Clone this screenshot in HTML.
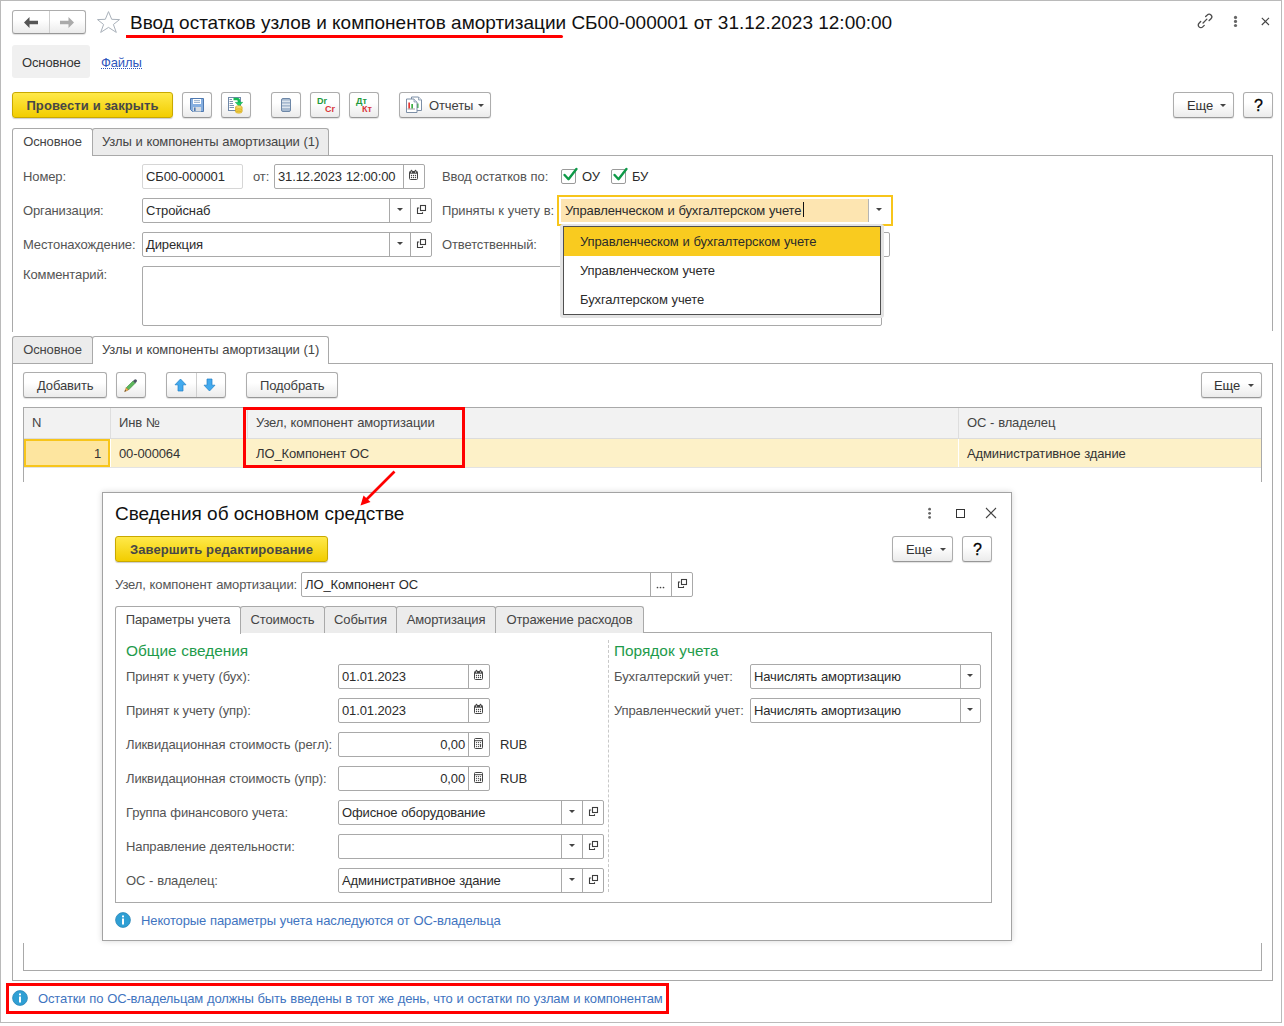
<!DOCTYPE html>
<html><head><meta charset="utf-8">
<style>
*{box-sizing:border-box;margin:0;padding:0}
html,body{width:1284px;height:1026px;overflow:hidden;background:#fff}
body{font-family:"Liberation Sans",sans-serif;font-size:13px;color:#333;position:relative;letter-spacing:-0.12px;word-spacing:0.35px}
.a{position:absolute}
.t{position:absolute;white-space:nowrap;line-height:16px}
.btn{position:absolute;border:1px solid #adadad;border-bottom-color:#979797;border-radius:3px;background:linear-gradient(#ffffff 0%,#ffffff 40%,#ebebeb 100%);box-shadow:0 1px 1px rgba(0,0,0,.12)}
.ybtn{position:absolute;border:1px solid #c9a900;border-radius:3px;background:linear-gradient(#ffe94a,#f2cd00);box-shadow:0 1px 1px rgba(0,0,0,.2);font-weight:bold;color:#474747;text-align:center;letter-spacing:.1px;word-spacing:0}
.fld{position:absolute;border:1px solid #a9a9a9;border-radius:2px;background:#fff}
.sep{position:absolute;top:0;bottom:0;width:1px;background:#a9a9a9}
.lbl{position:absolute;white-space:nowrap;color:#545454;line-height:16px}
.val{position:absolute;white-space:nowrap;color:#2b2b2b;line-height:16px}
.tab{position:absolute;border:1px solid #a9a9a9;border-bottom:none;border-radius:3px 3px 0 0;background:#ececec;color:#444;text-align:center;white-space:nowrap}
.tab.act{background:#fff}
.ln{position:absolute;background:#a9a9a9}
.red{position:absolute;border:3px solid #ff0000}
.arr{position:absolute;width:0;height:0;border-left:3px solid transparent;border-right:3px solid transparent;border-top:3.5px solid #444}
</style></head><body>

<!-- outer frame -->
<div class="a" style="left:0;top:0;width:1282px;height:1023px;border:1px solid #bababa"></div>

<!-- nav -->
<div class="btn" style="left:12px;top:10px;width:74px;height:24px;border-radius:3px"></div>
<div class="ln" style="left:49px;top:11px;width:1px;height:22px;background:#cfcfcf"></div>
<svg class="a" style="left:23px;top:16px" width="16" height="13" viewBox="0 0 16 13"><path d="M1 6.5 L6.5 1 V4.8 H15 V8.2 H6.5 V12 Z" fill="#555"/></svg>
<svg class="a" style="left:59px;top:16px" width="16" height="13" viewBox="0 0 16 13"><path d="M15 6.5 L9.5 1 V4.8 H1 V8.2 H9.5 V12 Z" fill="#aaa"/></svg>
<svg class="a" style="left:96px;top:11px" width="25" height="23" viewBox="0 0 25 23"><path d="M12.5 0.6 L15.7 8.3 L23.5 8.6 L17.4 13.5 L20.3 21.4 L12.5 16.4 L4.7 21.4 L7.6 13.5 L1.5 8.6 L9.3 8.3 Z" fill="none" stroke="#a9b1ba" stroke-width="1"/></svg>

<!-- title -->
<div class="t" style="left:130px;top:12px;font-size:19px;line-height:22px;color:#111;letter-spacing:0;word-spacing:0">Ввод остатков узлов и компонентов амортизации СБ00-000001 от 31.12.2023 12:00:00</div>
<div class="a" style="left:126px;top:35px;width:437px;height:3px;background:#ff0000;border-radius:0 2px 2px 0"></div>

<!-- top right icons -->
<svg class="a" style="left:1197px;top:13px" width="16" height="16" viewBox="0 0 19 19"><g fill="none" stroke="#4d4d4d" stroke-width="1.6" stroke-linecap="round"><path d="M10.3 4.2 L12.2 2.4 A3 3 0 0 1 16.6 6.8 L14.4 9"/><path d="M8.6 14.7 L6.8 16.5 A3 3 0 0 1 2.4 12.1 L4.4 10"/><path d="M7.2 11.8 L11.7 7.3"/></g></svg>
<svg class="a" style="left:1232px;top:14px" width="8" height="15" viewBox="0 0 8 15"><circle cx="3.5" cy="3.4" r="1.6" fill="#666"/><circle cx="3.5" cy="7.4" r="1.6" fill="#666"/><circle cx="3.5" cy="11.5" r="1.6" fill="#666"/></svg>
<svg class="a" style="left:1260px;top:16px" width="11" height="11" viewBox="0 0 11 11"><path d="M1.8 1.8 L9 9 M9 1.8 L1.8 9" stroke="#444" stroke-width="1.1"/></svg>

<!-- section nav -->
<div class="a" style="left:12px;top:45px;width:78px;height:33px;background:#f0f0f0;border-radius:3px"></div>
<div class="t" style="left:22px;top:55px;color:#333">Основное</div>
<div class="t" style="left:101px;top:55px;color:#2d55bd">Файлы</div>
<div class="a" style="left:101px;top:68px;width:41px;height:0;border-top:1px dotted #2d55bd"></div>


<!-- toolbar -->
<div class="ybtn" style="left:12px;top:92px;width:161px;height:26px;line-height:25px">Провести и закрыть</div>
<div class="btn" style="left:182px;top:92px;width:30px;height:26px"></div>
<svg class="a" style="left:189px;top:97px" width="16" height="16" viewBox="0 0 16 16"><path d="M1.5 1.5 H14.5 V14.5 H3.5 L1.5 12.5 Z" fill="#86afe0" stroke="#4f79b0"/><rect x="4" y="2" width="8" height="5" fill="#fff"/><path d="M5 3.6 H11 M5 5.4 H11" stroke="#7d9cc0" stroke-width=".8"/><rect x="4" y="10" width="8" height="4.5" fill="#d8dde2"/><rect x="5" y="10.5" width="1.6" height="3.5" fill="#4f79b0"/></svg>
<div class="btn" style="left:221px;top:92px;width:30px;height:26px"></div>
<svg class="a" style="left:227px;top:96px" width="19" height="19" viewBox="0 0 19 19"><rect x="1.5" y="1.5" width="12" height="13" fill="#fff" stroke="#7088a8"/><path d="M2.5 3.5 H5 M2.5 5.5 H6 M2.5 7.5 H6 M2.5 9.5 H7 M2.5 11.5 H7" stroke="#6f86a6" stroke-width=".9"/><path d="M6.5 3 H10 Q12 3 12 5.5 V7" fill="none" stroke="#14b955" stroke-width="2.6"/><path d="M8.3 6.3 H15.7 L12 10.3 Z" fill="#1ccf63" stroke="#12a54b" stroke-width=".5"/><path d="M8.5 11 V15.8 A3.3 1.4 0 0 0 15.1 15.8 V11" fill="#f2d54e" stroke="#d1a316" stroke-width=".6"/><ellipse cx="11.8" cy="11" rx="3.3" ry="1.3" fill="#f8e27a" stroke="#d1a316" stroke-width=".6"/><path d="M8.5 12.8 A3.3 1.3 0 0 0 15.1 12.8 M8.5 14.4 A3.3 1.3 0 0 0 15.1 14.4" fill="none" stroke="#d1a316" stroke-width=".6"/></svg>
<div class="btn" style="left:271px;top:92px;width:30px;height:26px"></div>
<svg class="a" style="left:280px;top:97px" width="12" height="16" viewBox="0 0 12 16"><rect x="1.5" y="1.5" width="9" height="13" rx="1.5" fill="#a7bad0" stroke="#6d87a7"/><path d="M2 4.2 H10 M2 7.2 H10 M2 10.3 H10" stroke="#eef3f8" stroke-width="1.1"/></svg>
<div class="btn" style="left:310px;top:92px;width:30px;height:26px"></div>
<div class="t" style="left:317px;top:96px;font-size:9px;font-weight:bold;color:#1e9a3c;line-height:10px;letter-spacing:0">Dr</div>
<div class="t" style="left:325px;top:104px;font-size:9px;font-weight:bold;color:#d9343a;line-height:10px;letter-spacing:0">Cr</div>
<div class="btn" style="left:349px;top:92px;width:30px;height:26px"></div>
<div class="t" style="left:356px;top:96px;font-size:9px;font-weight:bold;color:#1e9a3c;line-height:10px;letter-spacing:0">Дт</div>
<div class="t" style="left:362px;top:104px;font-size:9px;font-weight:bold;color:#d9343a;line-height:10px;letter-spacing:0">Кт</div>
<div class="btn" style="left:399px;top:92px;width:92px;height:26px"></div>
<svg class="a" style="left:405px;top:96px" width="17" height="18" viewBox="0 0 17 18"><path d="M6.5 1 H13.5 L16.5 4 V14.5 H6.5 Z" fill="#fff" stroke="#7d8fa6"/><path d="M13.5 1 V4 H16.5" fill="#dde3ea" stroke="#7d8fa6" stroke-width=".7"/><rect x="12" y="7.5" width="1.5" height="4.5" fill="#3cb043"/><path d="M1.5 3 H9 L12 6 V16.5 H1.5 Z" fill="#fff" stroke="#7d8fa6"/><path d="M9 3 V6 H12" fill="#dde3ea" stroke="#7d8fa6" stroke-width=".7"/><rect x="3.3" y="6.5" width="1.7" height="6" fill="#e53935"/><rect x="6.3" y="8" width="1.7" height="4.5" fill="#3cb043"/><path d="M2.5 13 H10" stroke="#777" stroke-width=".7"/></svg>
<div class="t" style="left:429px;top:98px;color:#404040">Отчеты</div>
<div class="arr" style="left:478px;top:104px"></div>
<div class="btn" style="left:1173px;top:92px;width:61px;height:26px"></div>
<div class="t" style="left:1187px;top:98px;color:#333">Еще</div>
<div class="arr" style="left:1220px;top:104px"></div>
<div class="btn" style="left:1243px;top:92px;width:30px;height:26px"></div>
<div class="t" style="left:1254px;top:97px;color:#000;font-size:16px;line-height:18px;-webkit-text-stroke:0.3px #000">?</div>

<!-- tabs 1 -->
<div class="ln" style="left:92px;top:155px;width:1181px;height:1px"></div>
<div class="ln" style="left:1272px;top:155px;width:1px;height:176px"></div>
<div class="ln" style="left:12px;top:155px;width:1px;height:177px"></div>
<div class="tab act" style="left:12px;top:128px;width:81px;height:28px;line-height:26px;border-bottom:none">Основное</div>
<div class="tab" style="left:92px;top:128px;width:237px;height:27px;line-height:26px">Узлы и компоненты амортизации (1)</div>

<!-- form rows -->
<div class="lbl" style="left:23px;top:169px">Номер:</div>
<div class="fld" style="left:142px;top:164px;width:101px;height:25px;border-color:#d6d6d6"></div>
<div class="val" style="left:146px;top:169px">СБ00-000001</div>
<div class="lbl" style="left:253px;top:169px">от:</div>
<div class="fld" style="left:274px;top:164px;width:151px;height:25px"><div class="sep" style="left:128px"></div></div>
<div class="val" style="left:278px;top:169px">31.12.2023 12:00:00</div>
<svg class="a" style="left:408px;top:169px" width="11" height="12" viewBox="0 0 11 12"><rect x="1.5" y="2.5" width="8" height="8" rx="1" fill="#fff" stroke="#444"/><rect x="1.5" y="2.5" width="8" height="2.2" fill="#444"/><circle cx="3.5" cy="1.6" r="0.9" fill="#444"/><circle cx="7.5" cy="1.6" r="0.9" fill="#444"/><rect x="3" y="2.6" width="1" height="1" fill="#fff"/><rect x="7" y="2.6" width="1" height="1" fill="#fff"/><g fill="#444"><circle cx="3.5" cy="6.5" r=".65"/><circle cx="5.5" cy="6.5" r=".65"/><circle cx="7.5" cy="6.5" r=".65"/><circle cx="3.5" cy="8.5" r=".65"/><circle cx="5.5" cy="8.5" r=".65"/><circle cx="7.5" cy="8.5" r=".65"/></g></svg>

<div class="lbl" style="left:442px;top:169px">Ввод остатков по:</div>
<div class="a" style="left:561px;top:169px;width:15px;height:15px;border:1px solid #9a9a9a;border-radius:2px;background:#fff"></div>
<svg class="a" style="left:563px;top:166px" width="16" height="16" viewBox="0 0 16 16"><path d="M1.6 9 L5.5 13.2 L13.4 3" fill="none" stroke="#0e9a48" stroke-width="2.4" stroke-linecap="round" stroke-linejoin="round"/></svg>
<div class="val" style="left:582px;top:169px">ОУ</div>
<div class="a" style="left:611px;top:169px;width:15px;height:15px;border:1px solid #9a9a9a;border-radius:2px;background:#fff"></div>
<svg class="a" style="left:613px;top:166px" width="16" height="16" viewBox="0 0 16 16"><path d="M1.6 9 L5.5 13.2 L13.4 3" fill="none" stroke="#0e9a48" stroke-width="2.4" stroke-linecap="round" stroke-linejoin="round"/></svg>
<div class="val" style="left:632px;top:169px">БУ</div>

<div class="lbl" style="left:23px;top:203px">Организация:</div>
<div class="fld" style="left:142px;top:198px;width:290px;height:25px"><div class="sep" style="left:246px"></div><div class="sep" style="left:267px"></div></div>
<div class="val" style="left:146px;top:203px">Стройснаб</div>
<div class="arr" style="left:397px;top:208px"></div>
<svg class="a" style="left:416px;top:204px" width="11" height="11" viewBox="0 0 11 11"><g fill="none" stroke="#3d3d3d" stroke-width="1.1"><rect x="4.5" y="1.5" width="5" height="5"/><path d="M3.2 4 H1.5 V9.5 H6.5 V8.2"/></g></svg>

<div class="lbl" style="left:442px;top:203px">Приняты к учету в:</div>
<div class="a" style="left:557px;top:195px;width:336px;height:31px;border:2px solid #f7c51b;background:#fff"></div>
<div class="a" style="left:561px;top:199px;width:307px;height:23px;background:#fde5b1"></div>
<div class="ln" style="left:868px;top:199px;width:1px;height:23px;background:#b5b5b5"></div>
<div class="val" style="left:565px;top:203px">Управленческом и бухгалтерском учете</div>
<div class="a" style="left:803px;top:202px;width:1px;height:15px;background:#111"></div>
<div class="arr" style="left:876px;top:208px"></div>

<div class="lbl" style="left:23px;top:237px">Местонахождение:</div>
<div class="fld" style="left:142px;top:232px;width:290px;height:25px"><div class="sep" style="left:246px"></div><div class="sep" style="left:267px"></div></div>
<div class="val" style="left:146px;top:237px">Дирекция</div>
<div class="arr" style="left:397px;top:242px"></div>
<svg class="a" style="left:416px;top:238px" width="11" height="11" viewBox="0 0 11 11"><g fill="none" stroke="#3d3d3d" stroke-width="1.1"><rect x="4.5" y="1.5" width="5" height="5"/><path d="M3.2 4 H1.5 V9.5 H6.5 V8.2"/></g></svg>
<div class="lbl" style="left:442px;top:237px">Ответственный:</div>
<div class="fld" style="left:570px;top:232px;width:320px;height:25px"></div>

<div class="lbl" style="left:23px;top:267px">Комментарий:</div>
<div class="fld" style="left:142px;top:266px;width:740px;height:60px"></div>

<!-- dropdown list -->
<div class="a" style="left:560px;top:224px;width:324px;height:94px;background:#e3e3e3;border-radius:3px"></div>
<div class="a" style="left:563px;top:226px;width:318px;height:89px;border:1px solid #4f4f4f;background:#fff"></div>
<div class="a" style="left:564px;top:227px;width:316px;height:29px;background:#f9cb1f"></div>
<div class="val" style="left:580px;top:234px">Управленческом и бухгалтерском учете</div>
<div class="val" style="left:580px;top:263px">Управленческом учете</div>
<div class="val" style="left:580px;top:292px">Бухгалтерском учете</div>

<!-- tabs 2 -->
<div class="ln" style="left:12px;top:363px;width:1261px;height:1px"></div>
<div class="ln" style="left:1272px;top:363px;width:1px;height:618px"></div>
<div class="ln" style="left:12px;top:363px;width:1px;height:618px"></div>
<div class="ln" style="left:12px;top:980px;width:1261px;height:1px"></div>
<div class="tab" style="left:12px;top:336px;width:81px;height:27px;line-height:26px">Основное</div>
<div class="tab act" style="left:92px;top:336px;width:237px;height:28px;line-height:26px">Узлы и компоненты амортизации (1)</div>

<!-- table toolbar -->
<div class="btn" style="left:23px;top:372px;width:84px;height:26px"></div>
<div class="t" style="left:37px;top:378px;color:#3d3d3d">Добавить</div>
<div class="btn" style="left:116px;top:372px;width:30px;height:26px"></div>
<svg class="a" style="left:123px;top:378px" width="15" height="15" viewBox="0 0 15 15"><path d="M3.2 9.8 L10 3 L12.2 5.2 L5.4 12 Z" fill="#5cb85c" stroke="#3f8a3f" stroke-width=".6"/><path d="M10 3 L11.3 1.7 A1.55 1.55 0 0 1 13.5 3.9 L12.2 5.2 Z" fill="#4b5563"/><path d="M3.2 9.8 L5.4 12 L1.6 13.6 Z" fill="#f4b24a" stroke="#a86d1c" stroke-width=".5"/><path d="M1.6 13.6 L2.2 12.1 L3.1 13 Z" fill="#333"/></svg>
<div class="btn" style="left:166px;top:372px;width:60px;height:26px"></div>
<div class="ln" style="left:196px;top:373px;width:1px;height:24px;background:#cfcfcf"></div>
<svg class="a" style="left:174px;top:378px" width="13" height="14" viewBox="0 0 13 14"><path d="M6.5 1 L12 6.8 H9 V13 H4 V6.8 H1 Z" fill="#42aaee" stroke="#1f7fc6" stroke-width=".7"/></svg>
<svg class="a" style="left:203px;top:378px" width="13" height="14" viewBox="0 0 13 14"><path d="M6.5 13 L12 7.2 H9 V1 H4 V7.2 H1 Z" fill="#42aaee" stroke="#1f7fc6" stroke-width=".7"/></svg>
<div class="btn" style="left:246px;top:372px;width:92px;height:26px"></div>
<div class="t" style="left:260px;top:378px;color:#3d3d3d">Подобрать</div>
<div class="btn" style="left:1201px;top:372px;width:61px;height:26px"></div>
<div class="t" style="left:1214px;top:378px;color:#333">Еще</div>
<div class="arr" style="left:1248px;top:384px"></div>

<!-- table -->
<div class="a" style="left:23px;top:407px;width:1239px;height:75px;border:1px solid #a9a9a9;border-bottom:none"></div>
<div class="a" style="left:24px;top:408px;width:1237px;height:30px;background:#f2f2f2"></div>
<div class="ln" style="left:24px;top:438px;width:1237px;height:1px;background:#dcdcdc"></div>
<div class="ln" style="left:110px;top:408px;width:1px;height:30px;background:#dedede"></div>
<div class="ln" style="left:247px;top:408px;width:1px;height:30px;background:#dedede"></div>
<div class="ln" style="left:958px;top:408px;width:1px;height:30px;background:#dedede"></div>
<div class="a" style="left:24px;top:439px;width:1237px;height:28px;background:#fdf1c8"></div>
<div class="ln" style="left:110px;top:439px;width:1px;height:28px;background:#fff"></div>
<div class="ln" style="left:958px;top:439px;width:1px;height:28px;background:#fff"></div>
<div class="ln" style="left:24px;top:467px;width:1237px;height:1px;background:#e3e3e3"></div>
<div class="a" style="left:24px;top:439px;width:86px;height:28px;border:2px solid #f7c51b;background:#fde59f"></div>
<div class="t" style="left:32px;top:415px;color:#444">N</div>
<div class="t" style="left:119px;top:415px;color:#444">Инв №</div>
<div class="t" style="left:256px;top:415px;color:#444">Узел, компонент амортизации</div>
<div class="t" style="left:967px;top:415px;color:#444">ОС - владелец</div>
<div class="t" style="left:94px;top:446px;color:#333">1</div>
<div class="t" style="left:119px;top:446px;color:#333">00-000064</div>
<div class="t" style="left:256px;top:446px;color:#333">ЛО_Компонент ОС</div>
<div class="t" style="left:967px;top:446px;color:#333">Административное здание</div>
<div class="red" style="left:243px;top:407px;width:222px;height:61px"></div>
<div class="ln" style="left:23px;top:943px;width:1px;height:28px"></div>
<div class="ln" style="left:1261px;top:943px;width:1px;height:28px"></div>
<div class="ln" style="left:23px;top:970px;width:1239px;height:1px"></div>

<!-- popup -->
<div class="a" style="left:102px;top:492px;width:910px;height:449px;border:1px solid #a3a3a3;background:#fff;box-shadow:0 0 6px rgba(0,0,0,.16)"></div>
<div class="t" style="left:115px;top:503px;font-size:19px;line-height:22px;color:#111;letter-spacing:0;word-spacing:0">Сведения об основном средстве</div>
<svg class="a" style="left:926px;top:506px" width="8" height="15" viewBox="0 0 8 15"><circle cx="3.6" cy="3.2" r="1.4" fill="#666"/><circle cx="3.6" cy="7.3" r="1.4" fill="#666"/><circle cx="3.6" cy="11.4" r="1.4" fill="#666"/></svg>
<div class="a" style="left:956px;top:509px;width:9px;height:9px;border:1.3px solid #333"></div>
<svg class="a" style="left:984px;top:506px" width="13" height="13" viewBox="0 0 13 13"><path d="M2 2 L12 12 M12 2 L2 12" stroke="#444" stroke-width="1.1"/></svg>
<div class="ybtn" style="left:115px;top:536px;width:213px;height:26px;line-height:25px">Завершить редактирование</div>
<div class="btn" style="left:892px;top:536px;width:61px;height:26px"></div>
<div class="t" style="left:906px;top:542px;color:#333">Еще</div>
<div class="arr" style="left:940px;top:548px"></div>
<div class="btn" style="left:962px;top:536px;width:30px;height:26px"></div>
<div class="t" style="left:973px;top:541px;color:#000;font-size:16px;line-height:18px;-webkit-text-stroke:0.3px #000">?</div>

<div class="lbl" style="left:115px;top:577px">Узел, компонент амортизации:</div>
<div class="fld" style="left:301px;top:572px;width:392px;height:25px"><div class="sep" style="left:348px"></div><div class="sep" style="left:369px"></div></div>
<div class="val" style="left:305px;top:577px">ЛО_Компонент ОС</div>
<svg class="a" style="left:655px;top:585px" width="11" height="5" viewBox="0 0 11 5"><g fill="#444"><circle cx="2.5" cy="2.5" r=".85"/><circle cx="5.5" cy="2.5" r=".85"/><circle cx="8.5" cy="2.5" r=".85"/></g></svg>
<svg class="a" style="left:677px;top:578px" width="11" height="11" viewBox="0 0 11 11"><g fill="none" stroke="#3d3d3d" stroke-width="1.1"><rect x="4.5" y="1.5" width="5" height="5"/><path d="M3.2 4 H1.5 V9.5 H6.5 V8.2"/></g></svg>

<div class="ln" style="left:240px;top:632px;width:752px;height:1px"></div>
<div class="ln" style="left:991px;top:632px;width:1px;height:271px"></div>
<div class="ln" style="left:115px;top:632px;width:1px;height:271px"></div>
<div class="ln" style="left:115px;top:902px;width:877px;height:1px"></div>
<div class="tab act" style="left:115px;top:606px;width:126px;height:28px;line-height:26px">Параметры учета</div>
<div class="tab" style="left:240px;top:606px;width:85px;height:27px;line-height:26px">Стоимость</div>
<div class="tab" style="left:324px;top:606px;width:73px;height:27px;line-height:26px">События</div>
<div class="tab" style="left:396px;top:606px;width:100px;height:27px;line-height:26px">Амортизация</div>
<div class="tab" style="left:495px;top:606px;width:149px;height:27px;line-height:26px">Отражение расходов</div>

<div class="t" style="left:126px;top:642px;font-size:15.4px;line-height:18px;color:#1e9b4b;letter-spacing:0">Общие сведения</div>
<div class="t" style="left:614px;top:642px;font-size:15.4px;line-height:18px;color:#1e9b4b;letter-spacing:0">Порядок учета</div>
<div class="a" style="left:608px;top:640px;width:0;height:252px;border-left:1px dashed #c8c8c8"></div>

<div class="lbl" style="left:126px;top:669px">Принят к учету (бух):</div>
<div class="fld" style="left:338px;top:664px;width:152px;height:25px"><div class="sep" style="left:129px"></div></div>
<div class="val" style="left:342px;top:669px">01.01.2023</div>
<svg class="a" style="left:473px;top:669px" width="11" height="12" viewBox="0 0 11 12"><rect x="1.5" y="2.5" width="8" height="8" rx="1" fill="#fff" stroke="#444"/><rect x="1.5" y="2.5" width="8" height="2.2" fill="#444"/><circle cx="3.5" cy="1.6" r="0.9" fill="#444"/><circle cx="7.5" cy="1.6" r="0.9" fill="#444"/><rect x="3" y="2.6" width="1" height="1" fill="#fff"/><rect x="7" y="2.6" width="1" height="1" fill="#fff"/><g fill="#444"><circle cx="3.5" cy="6.5" r=".65"/><circle cx="5.5" cy="6.5" r=".65"/><circle cx="7.5" cy="6.5" r=".65"/><circle cx="3.5" cy="8.5" r=".65"/><circle cx="5.5" cy="8.5" r=".65"/><circle cx="7.5" cy="8.5" r=".65"/></g></svg>
<div class="lbl" style="left:126px;top:703px">Принят к учету (упр):</div>
<div class="fld" style="left:338px;top:698px;width:152px;height:25px"><div class="sep" style="left:129px"></div></div>
<div class="val" style="left:342px;top:703px">01.01.2023</div>
<svg class="a" style="left:473px;top:703px" width="11" height="12" viewBox="0 0 11 12"><rect x="1.5" y="2.5" width="8" height="8" rx="1" fill="#fff" stroke="#444"/><rect x="1.5" y="2.5" width="8" height="2.2" fill="#444"/><circle cx="3.5" cy="1.6" r="0.9" fill="#444"/><circle cx="7.5" cy="1.6" r="0.9" fill="#444"/><rect x="3" y="2.6" width="1" height="1" fill="#fff"/><rect x="7" y="2.6" width="1" height="1" fill="#fff"/><g fill="#444"><circle cx="3.5" cy="6.5" r=".65"/><circle cx="5.5" cy="6.5" r=".65"/><circle cx="7.5" cy="6.5" r=".65"/><circle cx="3.5" cy="8.5" r=".65"/><circle cx="5.5" cy="8.5" r=".65"/><circle cx="7.5" cy="8.5" r=".65"/></g></svg>
<div class="lbl" style="left:126px;top:737px">Ликвидационная стоимость (регл):</div>
<div class="fld" style="left:338px;top:732px;width:152px;height:25px"><div class="sep" style="left:129px"></div></div>
<div class="val" style="left:438px;top:737px;width:27px;text-align:right">0,00</div>
<svg class="a" style="left:473px;top:738px" width="11" height="12" viewBox="0 0 11 12"><rect x="1.5" y="0.5" width="8" height="10" rx="1" fill="#fff" stroke="#444"/><path d="M1.5 2.7 H9.5" stroke="#444"/><g fill="#444"><circle cx="3.5" cy="4.6" r=".65"/><circle cx="5.5" cy="4.6" r=".65"/><circle cx="7.5" cy="4.6" r=".65"/><circle cx="3.5" cy="6.6" r=".65"/><circle cx="5.5" cy="6.6" r=".65"/><circle cx="3.5" cy="8.6" r=".65"/><circle cx="5.5" cy="8.6" r=".65"/><rect x="6.9" y="6" width="1.2" height="3.2" rx=".6"/></g></svg><div class="val" style="left:500px;top:737px">RUB</div>
<div class="lbl" style="left:126px;top:771px">Ликвидационная стоимость (упр):</div>
<div class="fld" style="left:338px;top:766px;width:152px;height:25px"><div class="sep" style="left:129px"></div></div>
<div class="val" style="left:438px;top:771px;width:27px;text-align:right">0,00</div>
<svg class="a" style="left:473px;top:772px" width="11" height="12" viewBox="0 0 11 12"><rect x="1.5" y="0.5" width="8" height="10" rx="1" fill="#fff" stroke="#444"/><path d="M1.5 2.7 H9.5" stroke="#444"/><g fill="#444"><circle cx="3.5" cy="4.6" r=".65"/><circle cx="5.5" cy="4.6" r=".65"/><circle cx="7.5" cy="4.6" r=".65"/><circle cx="3.5" cy="6.6" r=".65"/><circle cx="5.5" cy="6.6" r=".65"/><circle cx="3.5" cy="8.6" r=".65"/><circle cx="5.5" cy="8.6" r=".65"/><rect x="6.9" y="6" width="1.2" height="3.2" rx=".6"/></g></svg><div class="val" style="left:500px;top:771px">RUB</div>
<div class="lbl" style="left:126px;top:805px">Группа финансового учета:</div>
<div class="fld" style="left:338px;top:800px;width:266px;height:25px"><div class="sep" style="left:222px"></div><div class="sep" style="left:243px"></div></div>
<div class="val" style="left:342px;top:805px">Офисное оборудование</div>
<div class="arr" style="left:569px;top:810px"></div>
<svg class="a" style="left:588px;top:806px" width="11" height="11" viewBox="0 0 11 11"><g fill="none" stroke="#3d3d3d" stroke-width="1.1"><rect x="4.5" y="1.5" width="5" height="5"/><path d="M3.2 4 H1.5 V9.5 H6.5 V8.2"/></g></svg>
<div class="lbl" style="left:126px;top:839px">Направление деятельности:</div>
<div class="fld" style="left:338px;top:834px;width:266px;height:25px"><div class="sep" style="left:222px"></div><div class="sep" style="left:243px"></div></div>
<div class="val" style="left:342px;top:839px"></div>
<div class="arr" style="left:569px;top:844px"></div>
<svg class="a" style="left:588px;top:840px" width="11" height="11" viewBox="0 0 11 11"><g fill="none" stroke="#3d3d3d" stroke-width="1.1"><rect x="4.5" y="1.5" width="5" height="5"/><path d="M3.2 4 H1.5 V9.5 H6.5 V8.2"/></g></svg>
<div class="lbl" style="left:126px;top:873px">ОС - владелец:</div>
<div class="fld" style="left:338px;top:868px;width:266px;height:25px"><div class="sep" style="left:222px"></div><div class="sep" style="left:243px"></div></div>
<div class="val" style="left:342px;top:873px">Административное здание</div>
<div class="arr" style="left:569px;top:878px"></div>
<svg class="a" style="left:588px;top:874px" width="11" height="11" viewBox="0 0 11 11"><g fill="none" stroke="#3d3d3d" stroke-width="1.1"><rect x="4.5" y="1.5" width="5" height="5"/><path d="M3.2 4 H1.5 V9.5 H6.5 V8.2"/></g></svg>

<div class="lbl" style="left:614px;top:669px">Бухгалтерский учет:</div>
<div class="fld" style="left:750px;top:664px;width:231px;height:25px"><div class="sep" style="left:209px"></div></div>
<div class="val" style="left:754px;top:669px">Начислять амортизацию</div>
<div class="arr" style="left:967px;top:674px"></div>
<div class="lbl" style="left:614px;top:703px">Управленческий учет:</div>
<div class="fld" style="left:750px;top:698px;width:231px;height:25px"><div class="sep" style="left:209px"></div></div>
<div class="val" style="left:754px;top:703px">Начислять амортизацию</div>
<div class="arr" style="left:967px;top:708px"></div>

<svg class="a" style="left:115px;top:912px" width="16" height="16" viewBox="0 0 16 16"><circle cx="8" cy="8" r="7.4" fill="#2f9fd4" stroke="#2a86b8" stroke-width=".8"/><rect x="7" y="3.5" width="2" height="1.8" fill="#fff"/><rect x="7" y="6.5" width="2" height="6" fill="#fff"/></svg>
<div class="t" style="left:141px;top:913px;color:#3f74c0">Некоторые параметры учета наследуются от ОС-владельца</div>

<!-- arrow -->
<svg class="a" style="left:355px;top:468px" width="45" height="42" viewBox="0 0 45 42"><path d="M39.5 3.5 L10 33" stroke="#ff0000" stroke-width="2.6"/><path d="M5.5 37.5 L8.5 27.5 L15.5 34 Z" fill="#ff0000"/></svg>


<!-- bottom message -->
<div class="red" style="left:6px;top:983px;width:663px;height:31px"></div>
<svg class="a" style="left:12px;top:990px" width="16" height="16" viewBox="0 0 16 16"><circle cx="8" cy="8" r="7.4" fill="#2f9fd4" stroke="#2a86b8" stroke-width=".8"/><rect x="7" y="3.5" width="2" height="1.8" fill="#fff"/><rect x="7" y="6.5" width="2" height="6" fill="#fff"/></svg>
<div class="t" style="left:38px;top:991px;color:#3f74c0">Остатки по ОС-владельцам должны быть введены в тот же день, что и остатки по узлам и компонентам</div>
</body></html>
